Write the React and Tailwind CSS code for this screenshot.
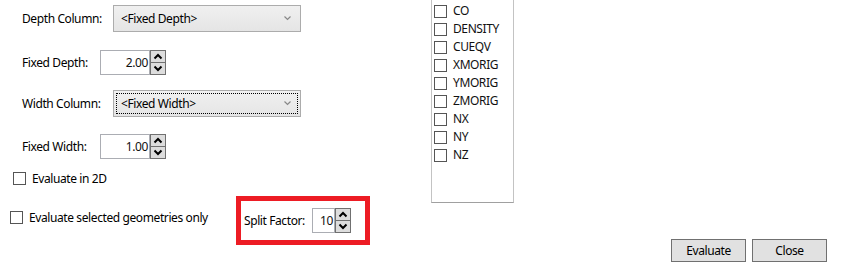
const FIELDS = ['CO', 'DENSITY', 'CUEQV', 'XMORIG', 'YMORIG', 'ZMORIG', 'NX', 'NY', 'NZ'];

function Chevron({ up }) {
  return (
    <svg width="10" height="7" viewBox="0 0 10 7" className="block">
      <polyline
        points={up ? '1.5,5.5 5,2 8.5,5.5' : '1.5,1.5 5,5 8.5,1.5'}
        fill="none"
        stroke="#000"
        strokeWidth="2"
      />
    </svg>
  );
}

function Spinner({ value, width }) {
  return (
    <div className="flex h-[25px]">
      <div className={`${width} h-full border border-[#abadb3] bg-white flex items-center justify-end pr-[1px] text-[#111]`}>
        {value}
      </div>
      <div className="flex flex-col w-[16px] h-full">
        <div className="flex-1 flex items-center justify-center bg-[#dddddd] border border-[#707070]">
          <Chevron up />
        </div>
        <div className="flex-1 flex items-center justify-center bg-[#dddddd] border border-t-0 border-[#707070]">
          <Chevron />
        </div>
      </div>
    </div>
  );
}

function Combo({ text, focused }) {
  return (
    <div className="w-[188px] h-[27px] border border-[#acacac] bg-gradient-to-b from-[#f0f0f0] to-[#e5e5e5] p-[2px]">
      <div className={`h-full flex items-center justify-between pl-[4px] pr-[6px] border border-dotted ${focused ? 'border-black' : 'border-transparent'}`}>
        <span>{text}</span>
        <svg width="7" height="5" viewBox="0 0 7 5">
          <polyline points="0.5,0.5 3.5,3.5 6.5,0.5" fill="none" stroke="#888" strokeWidth="1.2" />
        </svg>
      </div>
    </div>
  );
}

function Check() {
  return <div className="w-[13px] h-[13px] border border-[#555] bg-white shrink-0" />;
}

export default function App() {
  return (
    <div className="w-[841px] h-[279px] bg-white flex text-[12px] text-black leading-none tracking-[-0.4px] overflow-hidden" style={{ fontFamily: '"Noto Sans", "Segoe UI", sans-serif' }}>
      <div className="w-[431px] shrink-0 flex flex-col">
        <div className="flex items-center h-[27px] mt-[5px] pl-[22px]">
          <span className="w-[91px]">Depth Column:</span>
          <Combo text="<Fixed Depth>" />
        </div>
        <div className="flex items-center h-[25px] mt-[18px] pl-[22px]">
          <span className="w-[78px]">Fixed Depth:</span>
          <Spinner value="2.00" width="w-[50px]" />
        </div>
        <div className="flex items-center h-[27px] mt-[15px] pl-[22px]">
          <span className="w-[91px]">Width Column:</span>
          <Combo text="<Fixed Width>" focused />
        </div>
        <div className="flex items-center h-[25px] mt-[17px] pl-[22px]">
          <span className="w-[78px]">Fixed Width:</span>
          <Spinner value="1.00" width="w-[50px]" />
        </div>
        <div className="flex items-center h-[13px] mt-[13px] pl-[13px] gap-[6px]">
          <Check />
          <span>Evaluate in 2D</span>
        </div>
        <div className="flex items-start mt-[11px] pl-[10px]">
          <div className="w-[226px] flex items-center gap-[6px] h-[13px] mt-[15px]">
            <Check />
            <span>Evaluate selected geometries only</span>
          </div>
          <div className="w-[134px] h-[49px] border-[5px] border-[#ed1c24] flex items-center pl-[3px]">
            <span className="w-[68px]">Split Factor:</span>
            <Spinner value="10" width="w-[23px]" />
          </div>
        </div>
      </div>
      <div className="flex-1 flex flex-col">
        <div className="w-[83px] h-[203px] border border-t-0 border-[#c3c3c3] border-b-[#a0a0a0] pt-[2px] pl-[2px] flex flex-col">
          {FIELDS.map((f) => (
            <div key={f} className="flex items-center h-[18px] gap-[6px]">
              <Check />
              <span className="text-[#111]">{f}</span>
            </div>
          ))}
        </div>
        <div className="flex justify-end gap-[6px] mt-[36px] pr-[14px]">
          <button className="w-[75px] h-[23px] bg-[#e1e1e1] border border-[#707070] flex items-center justify-center">Evaluate</button>
          <button className="w-[75px] h-[23px] bg-[#e1e1e1] border border-[#707070] flex items-center justify-center">Close</button>
        </div>
      </div>
    </div>
  );
}
